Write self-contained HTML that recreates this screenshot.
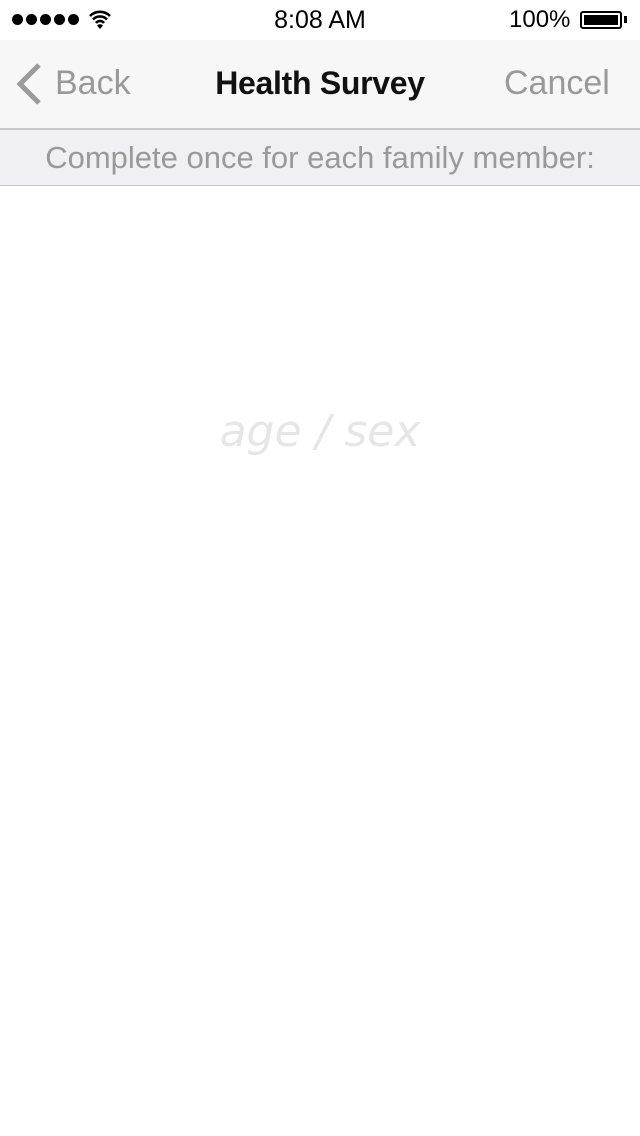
<!DOCTYPE html>
<html><head><style>
body{margin:0;width:640px;height:1136px;background:#fff;font-family:"Liberation Sans",sans-serif;position:relative;overflow:hidden}
.a{position:absolute;white-space:nowrap}
.d{position:absolute;top:14px;width:11px;height:11px;border-radius:50%;background:#000}
</style></head><body>
<div class="d" style="left:12px"></div><div class="d" style="left:26px"></div><div class="d" style="left:40px"></div><div class="d" style="left:54px"></div><div class="d" style="left:68px"></div>
<svg class="a" style="left:88px;top:9px" width="24" height="21" viewBox="0 0 24 21"><path d="M2 7a14 14 0 0 1 20 0M5 10.5a9.5 9.5 0 0 1 14 0M8 14a5 5 0 0 1 8 0" stroke="#000" stroke-width="2.6" fill="none"/><path d="M12 20l-3-3.5a4 4 0 0 1 6 0z"/></svg>
<div class="a" style="left:0;width:640px;text-align:center;top:6px;font-size:25px">8:08 AM</div>
<div class="a" style="left:509px;top:6px;font-size:24px">100%</div>
<div class="a" style="left:580px;top:11px;width:42px;height:18px;border:2px solid #000;border-radius:3px;box-sizing:border-box;padding:2px"><div style="background:#000;width:100%;height:100%"></div></div>
<div class="a" style="left:624px;top:16px;width:3px;height:7px;background:#000"></div>
<div class="a" style="left:0;top:40px;width:640px;height:88px;background:#f7f7f7;border-bottom:2px solid #c8c8c8"></div>
<svg class="a" style="left:14px;top:62px" width="30" height="44" viewBox="0 0 30 44"><path d="M25 3L6 22l19 19" stroke="#9b9b9b" stroke-width="5" fill="none"/></svg>
<div class="a" style="left:55px;top:64px;font-size:34px;color:#999">Back</div>
<div class="a" style="left:0;width:640px;text-align:center;top:65px;font-size:32px;color:#111;font-weight:bold;letter-spacing:-0.3px">Health Survey</div>
<div class="a" style="left:504px;top:64px;font-size:34px;color:#999">Cancel</div>
<div class="a" style="left:0;top:130px;width:640px;height:55px;background:#efeff4;border-bottom:1px solid #c8c8c8"></div>
<div class="a" style="left:0;width:640px;text-align:center;top:140px;font-size:31px;color:#999">Complete once for each family member:</div>
<div class="a" style="left:0;width:640px;text-align:center;top:406px;font-size:44px;color:#e6e6e6;font-style:italic;font-family:'DejaVu Sans',sans-serif;font-weight:200">age / sex</div>
</body></html>
